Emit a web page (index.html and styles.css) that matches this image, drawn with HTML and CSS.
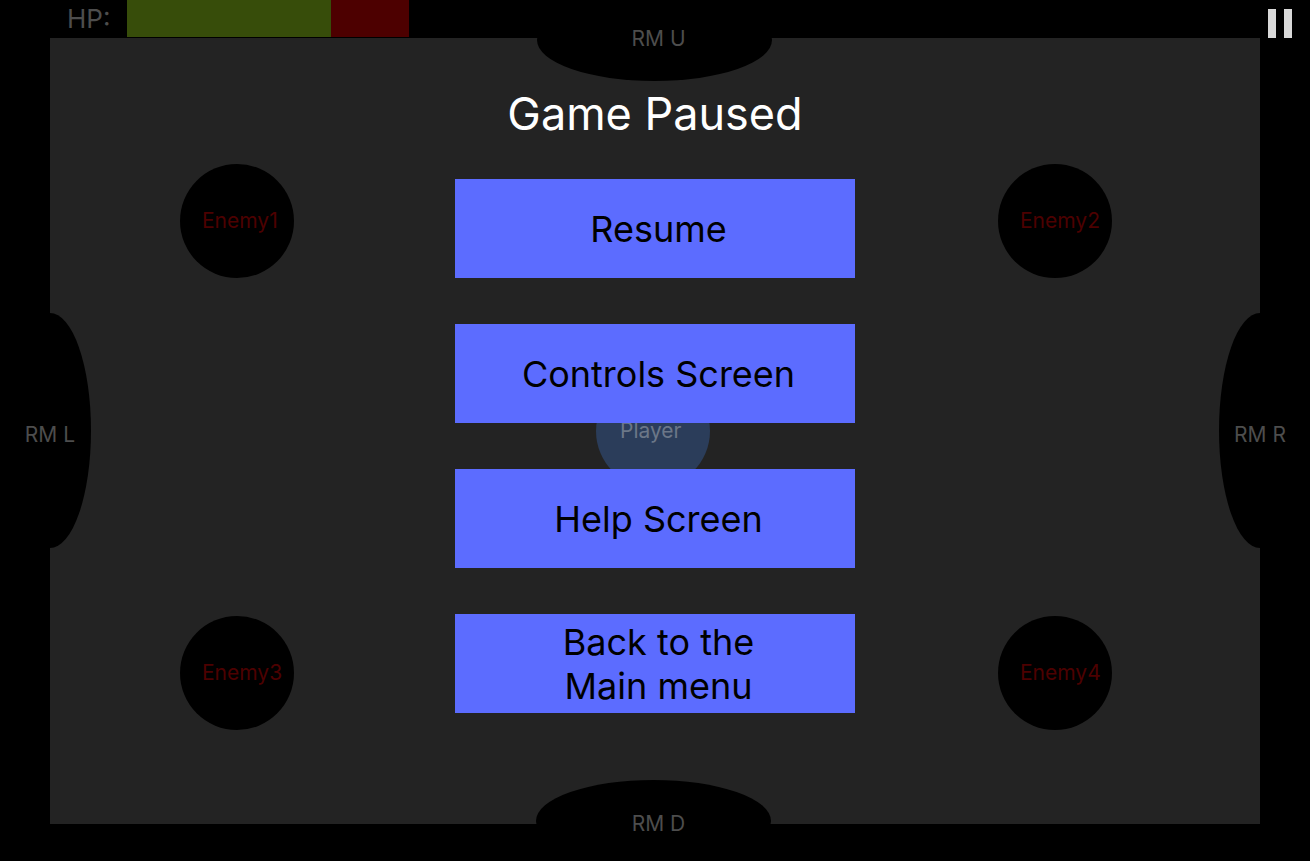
FILE: index.html
```html
<!DOCTYPE html>
<html lang="en">
<head>
<meta charset="utf-8">
<meta name="viewport" content="width=device-width, initial-scale=1">
<title>Game Paused</title>
<link rel="stylesheet" href="styles.css">
</head>
<body>
<div class="game">
  <header class="hud">
    <span class="hp-label" id="hp-label">HP:</span>
    <div class="hp-bar" role="img" aria-labelledby="hp-label"><div class="hp-left"></div></div>
    <button class="pause" type="button" aria-label="Pause">
      <svg width="24" height="29" viewBox="0 0 24 29" aria-hidden="true"><path fill="#d9d9d9" d="M0 0h8v29H0zM16 0h8v29h-8z"/></svg>
    </button>
  </header>
  <main class="arena">
    <div class="room room-up"><span>RM U</span></div>
    <div class="room room-left"><span>RM L</span></div>
    <div class="room room-right"><span>RM R</span></div>
    <div class="room room-down"><span>RM D</span></div>
    <div class="unit enemy north west">Enemy1</div>
    <div class="unit enemy north east">Enemy2</div>
    <div class="unit enemy south west">Enemy3</div>
    <div class="unit enemy south east">Enemy4</div>
    <div class="unit player">Player</div>
    <section class="menu">
      <h1 class="title">Game Paused</h1>
      <nav class="options">
        <button class="option" type="button">Resume</button>
        <button class="option" type="button">Controls Screen</button>
        <button class="option" type="button">Help Screen</button>
        <button class="option" type="button">Back to the<br>Main menu</button>
      </nav>
    </section>
  </main>
</div>
</body>
</html>
```
FILE: styles.css
```css
* {
  box-sizing: border-box;
}

body {
  margin: 0;
  background: #000;
  font-family: Inter, "Liberation Sans", sans-serif;
  font-weight: 400;
}

button {
  border: 0;
  font: inherit;
  cursor: pointer;
}

.game {
  display: flex;
  flex-direction: column;
  min-height: 100vh;
  padding-bottom: 37px;
}

.hud {
  display: flex;
  align-items: flex-start;
  height: 38px;
  padding: 0 18px 0 67px;
}

.hp-label {
  width: 60px;
  color: #4d4d4d;
  font-size: 26px;
  line-height: 37px;
}

.hp-bar {
  width: 282px;
  height: 37px;
  background: #4d0000;
}

.hp-left {
  width: 204px;
  height: 100%;
  background: #374d0a;
}

.pause {
  display: flex;
  margin-left: auto;
  padding: 9px 0 0;
  background: none;
}

.arena {
  position: relative;
  flex: 1;
  margin: 0 50px;
  background: #232323;
}

/* Exits to the neighbouring rooms, straddling the arena walls */
.room {
  position: absolute;
  display: flex;
  align-items: center;
  justify-content: center;
  border-radius: 50%;
  background: #000;
  color: #4d4d4d;
  font-size: 21px;
  line-height: 26px;
}

.room-up,
.room-down {
  left: calc(50% - 118px);
  width: 235px;
  height: 82px;
  padding-left: 8px;
}

.room-up {
  top: -39px;
  padding-bottom: 2px;
}

.room-down {
  left: calc(50% - 119px);
  bottom: -38px;
  padding: 6px 0 0 10px;
}

.room-left,
.room-right {
  top: calc(50% - 118px);
  width: 82px;
  height: 235px;
  padding-top: 8px;
}

.room-left {
  left: -41px;
}

.room-right {
  right: -41px;
}

.unit {
  position: absolute;
  display: flex;
  align-items: center;
  width: 114px;
  height: 114px;
  padding: 0 0 2px 22px;
  border-radius: 50%;
  font-size: 21px;
}

.enemy {
  background: #000;
  color: #4d0000;
}

.north {
  top: 126px;
}

.south {
  bottom: 94px;
}

.west {
  left: 130px;
}

.east {
  right: 148px;
}

.player {
  top: calc(50% - 57px);
  left: calc(50% - 59px);
  padding-left: 24px;
  background: #2b3d5a;
  color: #6b7788;
}

.menu {
  position: relative;
  display: flex;
  flex-direction: column;
  align-items: center;
  padding: 48px 0 64px;
}

.title {
  margin: 0 0 38px;
  color: #fff;
  font-size: 45px;
  font-weight: 400;
  line-height: 55px;
}

.options {
  display: flex;
  flex-direction: column;
  gap: 46px;
  width: 400px;
  max-width: 100%;
}

.option {
  height: 99px;
  padding: 0 0 0 7px;
  background: #5c6cff;
  color: #000;
  font-size: 36px;
  line-height: 44px;
}
```
